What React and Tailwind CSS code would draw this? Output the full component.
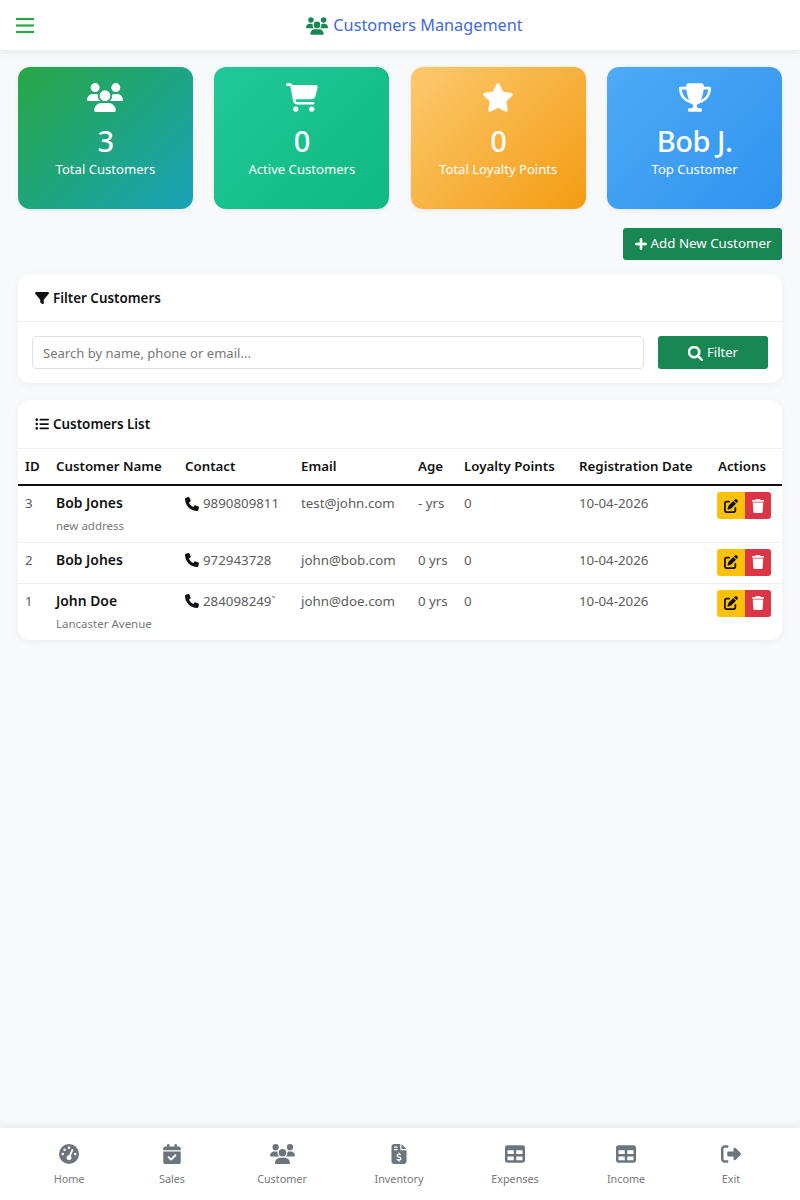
import React from "react";
import { FaUsers, FaCartShopping, FaStar, FaTrophy, FaPlus, FaFilter, FaMagnifyingGlass, FaListUl, FaPhone, FaPenToSquare, FaTrash, FaGaugeHigh, FaCalendarCheck, FaFileInvoiceDollar, FaTable, FaRightFromBracket } from "react-icons/fa6";

const stats = [
  { Icon: FaUsers, w: 36, h: 29, value: "3", label: "Total Customers", cls: "bg-[linear-gradient(135deg,#28a745,#17a2b8)]" },
  { Icon: FaCartShopping, w: 32, h: 29, value: "0", label: "Active Customers", cls: "bg-[linear-gradient(135deg,#20c997,#10b981)]" },
  { Icon: FaStar, w: 32, h: 29, value: "0", label: "Total Loyalty Points", cls: "bg-[linear-gradient(135deg,#fdc96f,#f39c12)]" },
  { Icon: FaTrophy, w: 32, h: 29, value: "Bob J.", label: "Top Customer", cls: "bg-[linear-gradient(135deg,#4dabf7,#2f93ef)]" },
];

const rows = [
  { id: 3, name: "Bob Jones", addr: "new address", phone: "9890809811", email: "test@john.com", age: "- yrs" },
  { id: 2, name: "Bob Johes", addr: "", phone: "972943728", email: "john@bob.com", age: "0 yrs" },
  { id: 1, name: "John Doe", addr: "Lancaster Avenue", phone: "284098249`", email: "john@doe.com", age: "0 yrs" },
];

const nav = [
  { Icon: FaGaugeHigh, label: "Home", cls: "w-[98px]", ic: "w-[20px] h-[20px]" },
  { Icon: FaCalendarCheck, label: "Sales", cls: "w-[108px]", ic: "w-[20px] h-[20px]" },
  { Icon: FaUsers, label: "Customer", cls: "w-[112px]", ic: "w-[25px] h-[20px]" },
  { Icon: FaFileInvoiceDollar, label: "Inventory", cls: "w-[122px]", ic: "w-[20px] h-[20px]" },
  { Icon: FaTable, label: "Expenses", cls: "w-[110px]", ic: "w-[20px] h-[20px]" },
  { Icon: FaTable, label: "Income", cls: "w-[112px]", ic: "w-[20px] h-[20px]" },
  { Icon: FaRightFromBracket, label: "Exit", cls: "w-[98px]", ic: "w-[20px] h-[20px]" },
];

const th = "text-left font-semibold text-[13.3px] text-[#111] px-[7px] h-[36px] border-b-2 border-[#111]";
const td = "align-top text-[13.3px] text-[#5c5c5c] px-[7px] pt-[7px] leading-[21px]";

export default function App() {
  return (
    <div className="min-h-[1200px] flex flex-col bg-[#f8f9fb] font-['Noto_Sans','Open_Sans',sans-serif]">
      <header className="h-[50px] bg-white shadow-[0_2px_8px_rgba(0,0,0,0.08)] flex items-center relative">
        <svg className="absolute left-[16px] top-[17px]" width="18" height="17" viewBox="0 0 18 17" stroke="#28a745" strokeWidth="2.2">
          <line x1="0" y1="2" x2="18" y2="2" />
          <line x1="0" y1="8.5" x2="18" y2="8.5" />
          <line x1="0" y1="15" x2="18" y2="15" />
        </svg>
        <div className="flex-1 flex justify-center items-center gap-[5px] pl-[29px] pt-[1px] text-[16.25px] text-[#4169e1]">
          <FaUsers className="text-[#198754] w-[22px] h-[18px]" />
          <span>Customers Management</span>
        </div>
      </header>

      <main className="flex-1 px-[18px] pt-[17px]">
        <div className="grid grid-cols-4 gap-x-[21.5px]">
          {stats.map(({ Icon, w, h, value, label, cls }) => (
            <div key={label} className={`h-[142px] rounded-[12px] flex flex-col items-center pt-[16px] text-white shadow-[0_1px_4px_rgba(0,0,0,0.08)] ${cls}`}>
              <Icon style={{ width: w, height: h }} />
              <div className="mt-[9px] text-[29px] leading-[40px] font-medium tracking-[-0.5px]">{value}</div>
              <div className="text-[13.1px] leading-[20px] mt-[-2px]">{label}</div>
            </div>
          ))}
        </div>

        <div className="flex justify-end mt-[19px]">
          <button className="h-[32px] w-[159px] rounded-[3px] bg-[#198754] text-white text-[13.3px] flex items-center justify-center gap-[3px]">
            <FaPlus className="w-[14px] h-[14px]" stroke="currentColor" strokeWidth="35" />
            <span>Add New Customer</span>
          </button>
        </div>

        <section className="mt-[14px] h-[109px] bg-white rounded-[12px] shadow-[0_2px_10px_rgba(0,0,0,0.05)]">
          <div className="h-[48px] border-b border-[#f0f1f3] flex items-center gap-[4px] pl-[17px] pt-[1px] text-[13.4px] font-semibold text-[#111]">
            <FaFilter className="w-[14px] h-[14px]" />
            <span>Filter Customers</span>
          </div>
          <div className="flex items-center gap-[14px] px-[14px] pt-[14px]">
            <input
              readOnly
              placeholder="Search by name, phone or email..."
              className="flex-1 h-[33px] rounded-[4px] border border-[#dee2e6] px-[10px] text-[13.05px] bg-white placeholder:text-[#777] outline-none"
            />
            <button className="w-[110px] h-[33px] pt-[1px] rounded-[3px] bg-[#198754] text-white text-[13.1px] flex items-center justify-center gap-[4px]">
              <FaMagnifyingGlass className="w-[15px] h-[15px]" stroke="currentColor" strokeWidth="25" />
              <span>Filter</span>
            </button>
          </div>
        </section>

        <section className="mt-[17px] bg-white rounded-[12px] shadow-[0_2px_10px_rgba(0,0,0,0.05)] overflow-hidden">
          <div className="h-[49px] border-b border-[#f0f1f3] flex items-center gap-[4px] pl-[17px] text-[13.4px] font-semibold text-[#111]">
            <FaListUl className="w-[14px] h-[14px]" />
            <span>Customers List</span>
          </div>
          <table className="w-full table-fixed border-collapse">
            <colgroup>
              <col className="w-[31px]" />
              <col className="w-[129px]" />
              <col className="w-[116px]" />
              <col className="w-[117px]" />
              <col className="w-[46px]" />
              <col className="w-[115px]" />
              <col className="w-[139px]" />
              <col className="w-[71px]" />
            </colgroup>
            <thead>
              <tr>
                {["ID", "Customer Name", "Contact", "Email", "Age", "Loyalty Points", "Registration Date", "Actions"].map((h) => (
                  <th key={h} className={th}>{h}</th>
                ))}
              </tr>
            </thead>
            <tbody>
              {rows.map((r, i) => (
                <tr key={r.id} className={`${r.addr ? "h-[57px]" : "h-[41px]"} ${i < 2 ? "border-b border-[#eceef0]" : ""}`}>
                  <td className={td}>{r.id}</td>
                  <td className={td}>
                    <div className="font-semibold text-[13.9px] leading-[20px] text-[#111] whitespace-nowrap">{r.name}</div>
                    {r.addr && <div className="text-[11.5px] text-[#777] mt-[3px] leading-[20px] whitespace-nowrap">{r.addr}</div>}
                  </td>
                  <td className={td}>
                    <div className="flex items-center gap-[4px] whitespace-nowrap">
                      <FaPhone className="w-[14px] h-[14px] text-[#111]" />
                      <span>{r.phone}</span>
                    </div>
                  </td>
                  <td className={`${td} whitespace-nowrap`}>{r.email}</td>
                  <td className={`${td} whitespace-nowrap`}>{r.age}</td>
                  <td className={td}>0</td>
                  <td className={td}>10-04-2026</td>
                  <td className="align-top pt-[6px] pl-[6px]">
                    <div className="flex w-[54px] h-[27px] rounded-[3px] overflow-hidden">
                      <div className="w-[28px] bg-[#ffc107] flex items-center justify-center">
                        <FaPenToSquare className="w-[14px] h-[14px] text-[#111]" />
                      </div>
                      <div className="w-[26px] bg-[#dc3545] flex items-center justify-center">
                        <FaTrash className="w-[14px] h-[14px] text-white" />
                      </div>
                    </div>
                  </td>
                </tr>
              ))}
            </tbody>
          </table>
        </section>
      </main>

      <nav className="h-[72px] bg-white shadow-[0_-2px_8px_rgba(0,0,0,0.08)] flex items-start px-[20px] pt-[16px]">
        {nav.map(({ Icon, label, cls, ic }) => (
          <div key={label} className={`flex flex-col items-center text-[#6c757d] ${cls}`}>
            <Icon className={ic} />
            <span className="text-[10.8px] leading-[16px] mt-[7px] text-[#777]">{label}</span>
          </div>
        ))}
      </nav>
    </div>
  );
}
